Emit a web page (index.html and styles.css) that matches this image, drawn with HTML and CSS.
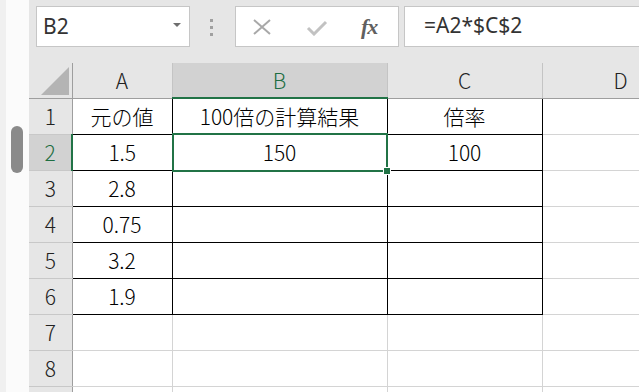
FILE: index.html
```html
<!DOCTYPE html>
<html lang="ja">
<head>
    <meta charset="UTF-8">
    <meta name="viewport" content="width=device-width, initial-scale=1.0">
    <title>Excel - 絶対参照</title>
    <link rel="stylesheet" href="styles.css">
</head>
<body>
<div class="app">
    <aside class="side">
        <div class="thumb"></div>
    </aside>

    <main class="sheet">
        <div class="toolbar">
            <div class="namebox">
                <span class="ref">B2</span>
                <span class="caret"></span>
            </div>
            <div class="grip"><i></i><i></i><i></i></div>
            <div class="fxbox">
                <svg class="icon cancel" width="20" height="16" viewBox="0 0 20 16">
                    <path d="M2 1 L18 15 M18 1 L2 15" stroke="#a8a8a8" stroke-width="2" fill="none"/>
                </svg>
                <svg class="icon enter" width="22" height="16" viewBox="0 0 22 16">
                    <path d="M2 8 L8 14 L20 2" stroke="#c2c2c2" stroke-width="3" fill="none"/>
                </svg>
                <span class="fx">fx</span>
            </div>
            <div class="formula">=A2*$C$2</div>
        </div>

        <table class="grid">
            <colgroup>
                <col class="c-head">
                <col class="c-a">
                <col class="c-b">
                <col class="c-c">
                <col class="c-d">
            </colgroup>
            <thead>
                <tr>
                    <th class="corner"><span class="tri"></span></th>
                    <th>A</th>
                    <th class="sel-col">B</th>
                    <th>C</th>
                    <th>D</th>
                </tr>
            </thead>
            <tbody>
                <tr>
                    <th>1</th>
                    <td class="box">元の値</td>
                    <td class="box">100倍の計算結果</td>
                    <td class="box">倍率</td>
                    <td></td>
                </tr>
                <tr>
                    <th class="sel-row">2</th>
                    <td class="box">1.5</td>
                    <td class="box active">150<span class="cursor"><span class="handle"></span></span></td>
                    <td class="box">100</td>
                    <td></td>
                </tr>
                <tr>
                    <th>3</th>
                    <td class="box">2.8</td>
                    <td class="box"></td>
                    <td class="box"></td>
                    <td></td>
                </tr>
                <tr>
                    <th>4</th>
                    <td class="box">0.75</td>
                    <td class="box"></td>
                    <td class="box"></td>
                    <td></td>
                </tr>
                <tr>
                    <th>5</th>
                    <td class="box">3.2</td>
                    <td class="box"></td>
                    <td class="box"></td>
                    <td></td>
                </tr>
                <tr>
                    <th>6</th>
                    <td class="box">1.9</td>
                    <td class="box"></td>
                    <td class="box"></td>
                    <td></td>
                </tr>
                <tr>
                    <th>7</th>
                    <td></td>
                    <td></td>
                    <td></td>
                    <td></td>
                </tr>
                <tr>
                    <th>8</th>
                    <td></td>
                    <td></td>
                    <td></td>
                    <td></td>
                </tr>
                <tr>
                    <th></th>
                    <td></td>
                    <td></td>
                    <td></td>
                    <td></td>
                </tr>
            </tbody>
        </table>
    </main>
</div>
</body>
</html>
```

FILE: styles.css
```css
html, body {
    margin: 0;
    padding: 0;
}
body {
    width: 639px;
    height: 392px;
    overflow: hidden;
    background-color: #fff;
    font-family: "Noto Sans CJK JP", "Noto Sans", sans-serif;
}
.app {
    display: flex;
    height: 392px;
}

/* left strip with scroll thumb */
.side {
    width: 23px;
    flex: none;
    background-color: #fbfbfb;
    border-left: 6px solid #f0f0f0;
}
.thumb {
    margin: 126px 0 0 5px;
    width: 12px;
    height: 47px;
    border-radius: 6px;
    background-color: #8a8a8a;
}

.sheet {
    flex: 1;
    overflow: hidden;
    background-color: #e6e6e6;
}

/* formula bar */
.toolbar {
    height: 63px;
    display: flex;
    align-items: flex-start;
    padding-top: 6px;
    box-sizing: border-box;
}
.namebox {
    margin-left: 7px;
    width: 154px;
    height: 41px;
    box-sizing: border-box;
    background-color: #fff;
    border: 1px solid #c6c6c6;
    display: flex;
    align-items: center;
    justify-content: space-between;
    padding: 0 8px 2px 6px;
    font-family: "Noto Sans", sans-serif;
    font-size: 21px;
    color: #333;
}
.caret {
    width: 0;
    height: 0;
    border-left: 4px solid transparent;
    border-right: 4px solid transparent;
    border-top: 4px solid #6e6e6e;
    margin-bottom: 1px;
}
.grip {
    margin: 13px 0 0 20px;
    width: 3px;
    display: flex;
    flex-direction: column;
    gap: 4px;
}
.grip i {
    display: block;
    width: 3px;
    height: 3px;
    background-color: #a0a0a0;
}
.fxbox {
    margin-left: 22px;
    width: 164px;
    height: 41px;
    box-sizing: border-box;
    background-color: #fff;
    border: 1px solid #c6c6c6;
    display: flex;
    align-items: center;
    padding-left: 16px;
}
.icon {
    display: block;
}
.enter {
    margin-left: 34px;
    margin-top: 3px;
}
.fx {
    margin-left: 33px;
    font-family: "Liberation Serif", serif;
    font-style: italic;
    font-weight: bold;
    font-size: 22px;
    color: #606060;
    letter-spacing: -1px;
}
.formula {
    margin-left: 5px;
    flex: 1;
    height: 41px;
    box-sizing: border-box;
    background-color: #fff;
    border: 1px solid #c6c6c6;
    border-right: none;
    padding: 0 0 3px 19px;
    display: flex;
    align-items: center;
    font-family: "Noto Sans", sans-serif;
    font-size: 21px;
    color: #333;
    white-space: nowrap;
}

/* grid */
.grid {
    border-collapse: collapse;
    table-layout: fixed;
    width: 670px;
    background-color: #fff;
    font-size: 21px;
    color: #000;
}
.c-head { width: 43px; }
.c-a { width: 100px; }
.c-b { width: 215px; }
.c-c { width: 155px; }
.c-d { width: 157px; }

.grid th,
.grid td {
    padding: 0;
    text-align: center;
    vertical-align: middle;
    font-weight: 300;
    line-height: 1;
    white-space: nowrap;
}
.grid thead tr {
    height: 35px;
}
.grid tbody tr {
    height: 36px;
}
.grid thead th {
    background-color: #e6e6e6;
    border-left: 1px solid #c4c4c4;
    border-right: 1px solid #c4c4c4;
    border-bottom: 1px solid #9e9e9e;
    color: #222;
}
.grid tbody th {
    background-color: #e6e6e6;
    border-right: 1px solid #9e9e9e;
    border-bottom: 1px solid #c8c8c8;
    color: #222;
}
.grid td {
    border: 1px solid #d4d4d4;
}
.grid td.box {
    border: 1px solid #000;
}

.grid th.corner {
    border-left: none;
    border-right: 1px solid #9e9e9e;
    position: relative;
}
.tri {
    position: absolute;
    right: 3px;
    bottom: 3px;
    width: 0;
    height: 0;
    border-left: 28px solid transparent;
    border-bottom: 28px solid #b4b4b4;
}

.grid th.sel-col {
    background-color: #d2d2d2;
    color: #1e6e42;
    border-bottom: 2px solid #217346;
}
.grid th.sel-row {
    background-color: #d2d2d2;
    color: #1e6e42;
    border-right: 2px solid #217346;
}

.grid td.active {
    position: relative;
}
.cursor {
    position: absolute;
    top: -2px;
    left: -1px;
    right: -1px;
    bottom: -2px;
    border: 2px solid #217346;
}
.handle {
    position: absolute;
    right: -5px;
    bottom: -5px;
    width: 6px;
    height: 6px;
    background-color: #217346;
    border: 1px solid #fff;
}
```
